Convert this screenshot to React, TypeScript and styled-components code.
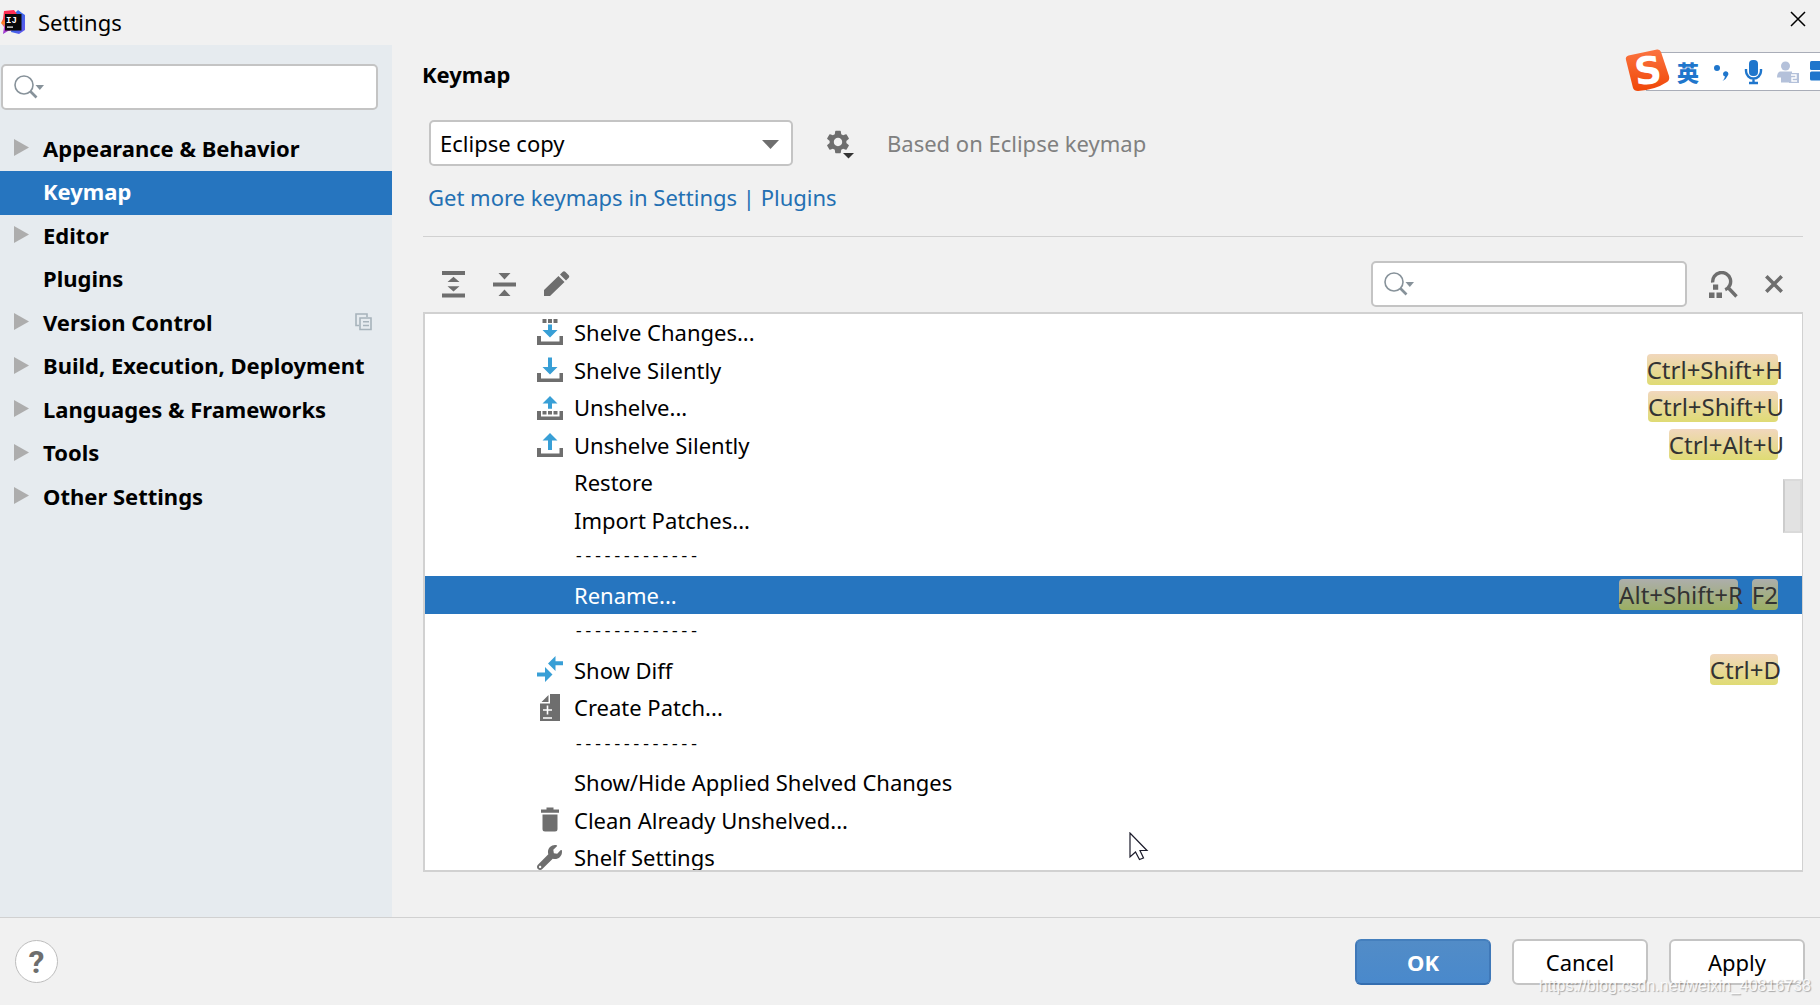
import React from "react";
import styled, { createGlobalStyle, css } from "styled-components";
import { FaWrench } from "react-icons/fa";
import { MdSettings } from "react-icons/md";

const GREY = "#6e6e6e";
const BLUE = "#389fd6";
const SELECTED = "#2675bf";
const LINE = "#d1d1d1";

const GlobalStyle = createGlobalStyle`
  *, *::before, *::after { box-sizing: border-box; }
  body { margin: 0; }
  body, button, input, select {
    font-family: "Noto Sans", "Open Sans", "Noto Sans CJK SC", sans-serif;
    font-size: 22px;
    line-height: 30px;
    color: #000;
  }
  button { border: 0; padding: 0; background: none; }
  svg { display: block; flex: none; }
`;

const Window = styled.div`
  height: 100vh;
  display: flex;
  flex-direction: column;
  background: #f1f1f1;
  overflow: hidden;
  position: relative;
`;

const TitleBar = styled.header`
  flex: none;
  height: 45px;
  display: flex;
  align-items: center;
  gap: 12px;
  padding: 0 14px 0 1px;
`;

const Title = styled.h1`
  flex: 1;
  margin: 0;
  padding-bottom: 2px;
  font-size: 22px;
  font-weight: 400;
`;

const IconButton = styled.button`
  display: flex;
  align-items: center;
  justify-content: center;
`;

const WindowClose = styled(IconButton)`
  align-self: flex-start;
  height: 38px;
`;

const Body = styled.div`
  flex: 1;
  min-height: 0;
  display: flex;
`;

const Sidebar = styled.nav`
  flex: none;
  width: 392px;
  padding-top: 19px;
  background: #e6ebef;
`;

const SearchBox = styled.label`
  display: flex;
  align-items: center;
  gap: 4px;
  height: 46px;
  padding: 0 10px;
  border: 2px solid #c4c4c4;
  border-radius: 5px;
  background: #fff;
`;

const SearchInput = styled.input`
  flex: 1;
  min-width: 0;
  border: 0;
  outline: 0;
  background: transparent;
`;

const SideSearch = styled.div`
  margin: 0 14px 18px 1px;
`;

const SideList = styled.ul`
  margin: 0;
  padding: 0;
  list-style: none;
`;

const SideItem = styled.li`
  height: 43px;
  &:nth-child(even) { height: 44px; }
`;

const SideButton = styled.button<{ $selected?: boolean }>`
  width: 100%;
  height: 100%;
  display: flex;
  align-items: center;
  padding: 0 20px 4px 14px;
  font-weight: 700;
  text-align: left;
  white-space: nowrap;
  ${(p) => p.$selected && css`background: ${SELECTED}; color: #fff;`}
`;

const ArrowSlot = styled.span`
  flex: none;
  width: 29px;
`;

const SideLabel = styled.span`
  flex: 1;
`;

const Main = styled.main`
  flex: 1;
  min-width: 0;
  display: flex;
  flex-direction: column;
  padding: 14px 17px 45px 31px;
`;

const Heading = styled.h2`
  margin: 0 0 31px -1px;
  font-size: 22px;
  font-weight: 700;
`;

const SchemeRow = styled.div`
  display: flex;
  align-items: center;
  padding-left: 6px;
`;

const SelectWrap = styled.div`
  position: relative;
  width: 364px;
  margin-right: 33px;
`;

const Select = styled.select`
  appearance: none;
  width: 100%;
  height: 46px;
  padding: 0 40px 0 9px;
  border: 2px solid #c4c4c4;
  border-radius: 5px;
  background: #fff;
`;

const SelectArrow = styled.svg`
  position: absolute;
  right: 14px;
  top: 20px;
  pointer-events: none;
`;

const BasedOn = styled.span`
  margin-left: 33px;
  color: #808080;
`;

const MoreLink = styled.a`
  align-self: flex-start;
  margin: 16px 0 24px 5px;
  color: #2470b3;
  text-decoration: none;
`;

const Divider = styled.hr`
  flex: none;
  width: 100%;
  height: 1px;
  margin: 0 0 24px;
  border: 0;
  background: ${LINE};
`;

const Toolbar = styled.div`
  display: flex;
  align-items: center;
  gap: 27px;
  padding: 0 20px 0 19px;
  margin-bottom: 5px;
`;

const ActionSearch = styled.div`
  width: 316px;
  margin: 0 -5px 0 auto;
`;

const ListFrame = styled.div`
  position: relative;
  flex: 1;
  min-height: 0;
  overflow: hidden;
  border: 2px solid ${LINE};
  border-right-width: 1px;
  background: #fff;
`;

const ActionList = styled.ul`
  margin: 0;
  padding: 0;
  list-style: none;
`;

const ActionRow = styled.li<{ $selected?: boolean }>`
  height: 37px;
  display: flex;
  align-items: center;
  padding: 0 24px 1px 112px;
  white-space: nowrap;
  &:nth-child(even) { height: 38px; }
  ${(p) => p.$selected && css`background: ${SELECTED}; color: #fff;`}
`;

const IconSlot = styled.span`
  flex: none;
  width: 37px;
`;

const ActionName = styled.span`
  flex: 1;
`;

const SeparatorName = styled(ActionName)`
  font-family: "Liberation Mono", monospace;
  font-size: 16px;
`;

const Shortcuts = styled.span`
  display: flex;
  gap: 14px;
  padding-bottom: 1px;
`;

const Key = styled.kbd<{ $selected?: boolean; $overhang: number }>`
  display: block;
  height: 31px;
  border-radius: 4px;
  font: inherit;
  font-size: 24px;
  line-height: 32px;
  color: #333;
  background: ${(p) =>
    p.$selected
      ? "linear-gradient(#adaeac, #9aae62)"
      : "linear-gradient(#f1d7bd, #dfdb74)"};
  > span { margin-right: ${(p) => -p.$overhang}px; }
`;

const ScrollThumb = styled.div`
  position: absolute;
  right: 0;
  top: 165px;
  width: 19px;
  height: 54px;
  border: 2px solid #dadada;
  border-left-color: #cccccc;
  background: #e2e2e2;
`;

const Footer = styled.footer`
  flex: none;
  height: 88px;
  display: flex;
  align-items: center;
  gap: 21px;
  padding: 0 15px;
  border-top: 1px solid ${LINE};
`;

const HelpButton = styled.button`
  width: 43px;
  height: 43px;
  margin-right: auto;
  border: 1px solid #bdbdbd;
  border-radius: 50%;
  background: #fff;
  color: ${GREY};
  font-family: Roboto, sans-serif;
  font-size: 32px;
  font-weight: 700;
`;

const DialogButton = styled.button<{ $primary?: boolean }>`
  width: 136px;
  height: 46px;
  border: 2px solid #c4c4c4;
  border-radius: 6px;
  background: #fff;
  ${(p) =>
    p.$primary &&
    css`
      border-color: #447fbd #3f78b8 #346eb0;
      background: linear-gradient(#528cc7, #4989cc);
      color: #fff;
      font-weight: 700;
    `}
`;

const Watermark = styled.div`
  position: absolute;
  right: 9px;
  bottom: 9px;
  font-family: "Liberation Sans", Arial, sans-serif;
  font-size: 16px;
  line-height: 20px;
  color: rgba(255, 255, 255, 0.85);
  text-shadow: 1px 1px 1px rgba(0, 0, 0, 0.3);
  pointer-events: none;
`;

const ImeBar = styled.div`
  position: absolute;
  top: 52px;
  right: 0;
  width: 174px;
  height: 39px;
  display: flex;
  align-items: center;
  padding-left: 30px;
  border: 1px solid #a9adb8;
  border-right: 0;
  background: #fff;
  color: #1f76cc;
`;

const ImeLogo = styled.svg`
  position: absolute;
  left: -23px;
  top: -5px;
`;

const ImeLanguage = styled.span`
  width: 38px;
  padding-bottom: 2px;
  font-family: "Noto Sans CJK SC", sans-serif;
  font-weight: 900;
`;

const Cursor = styled.svg`
  position: absolute;
  left: 704px;
  top: 518px;
  pointer-events: none;
`;

const SearchIcon = () => (
  <svg width="32" height="24" viewBox="0 0 32 24" fill="none">
    <circle cx="11" cy="10" r="9" stroke="#87929a" strokeWidth="1.6" />
    <path d="M17.5 16.5l6 6" stroke="#87929a" strokeWidth="2.6" />
    <path d="M22.500 10h8.500l-4.200 5z" fill="#87929a" />
  </svg>
);

const TreeArrow = () => (
  <svg width="15" height="17" viewBox="0 0 15 17">
    <path d="M0 0l15 8.500L0 17z" fill="#adadad" />
  </svg>
);

const CopyIcon = () => (
  <svg width="17" height="18" viewBox="0 0 17 18" fill="none" stroke="#a7b3bb" strokeWidth="1.6">
    <path d="M4 12.500H1V1h11v3" />
    <path d="M5 5h11v11.500H5zM8 8.800h6M8 12.500h6" />
  </svg>
);

const IdeaLogo = () => (
  <svg width="25" height="25" viewBox="0 0 25 25">
    <defs>
      <linearGradient id="ideaWarm" x1="0" y1="0" x2="0" y2="1">
        <stop offset="0" stopColor="#fe2857" />
        <stop offset="0.35" stopColor="#fb3a4a" />
        <stop offset="0.55" stopColor="#ff8a1f" />
        <stop offset="0.75" stopColor="#c93ad8" />
        <stop offset="1" stopColor="#9039d0" />
      </linearGradient>
      <linearGradient id="ideaCool" x1="0" y1="0" x2="1" y2="1">
        <stop offset="0" stopColor="#2b7be8" />
        <stop offset="0.5" stopColor="#3d63e8" />
        <stop offset="1" stopColor="#6b57f0" />
      </linearGradient>
    </defs>
    <path d="M13 4l4-4 4 3 3 2v15l-6 4-8-2z" fill="url(#ideaCool)" />
    <path d="M3 1l10-1 3 4-3 16-6 1-5 3 1-7-3-4 2-4z" fill="url(#ideaWarm)" />
    <rect x="4" y="4" width="16.500" height="16.500" fill="#080808" />
    <text x="5" y="12.500" fontFamily="Liberation Mono, monospace" fontSize="9" fontWeight="700" fill="#fff">IJ</text>
    <rect x="6" y="16.500" width="6" height="1.200" fill="#fff" />
  </svg>
);

const TRAY = "M0 17h4v5.500h18.500V17H26v9H0z";

const ICONS = {
  shelve: (
    <svg width="26" height="27" viewBox="0 0 26 27">
      <path d={`${TRAY}M5.500 0h4v4h-4zM11 0h4v4h-4zM16.500 0h4v4h-4z`} fill={GREY} />
      <path d="M11 5.500h4V11h5.500L13 18.500 5.500 11H11z" fill={BLUE} />
    </svg>
  ),
  shelveSilent: (
    <svg width="26" height="27" viewBox="0 0 26 27">
      <path d={TRAY} fill={GREY} />
      <path d="M11 1.500h4V11h5.500L13 18.500 5.500 11H11z" fill={BLUE} />
    </svg>
  ),
  unshelve: (
    <svg width="26" height="27" viewBox="0 0 26 27">
      <path d={`${TRAY}M5.500 17h4v3.500h-4zM11 17h4v3.500h-4zM16.500 17h4v3.500h-4z`} fill={GREY} />
      <path d="M13 2l7.500 7.500H15v5.200h-4V9.500H5.500z" fill={BLUE} />
    </svg>
  ),
  unshelveSilent: (
    <svg width="26" height="27" viewBox="0 0 26 27">
      <path d={TRAY} fill={GREY} />
      <path d="M13 2l7.500 7.500H15V19h-4V9.500H5.500z" fill={BLUE} />
    </svg>
  ),
  diff: (
    <svg width="27" height="27" viewBox="0 0 27 27">
      <path d="M11 7.500L18.500 0v5.200H26v4h-7.500V15zM15.500 18.500L8 11v5.500H0v4h8V26z" fill={BLUE} />
    </svg>
  ),
  patch: (
    <svg width="26" height="27" viewBox="0 0 26 27">
      <path d="M13 0h10v27H3V9.500h10zM4.500 8L11.500 1v7z" fill={GREY} />
      <path d="M10.500 11.500v9M6 16h9M6 24h9" stroke="#fff" strokeWidth="1.600" />
    </svg>
  ),
  trash: (
    <svg width="26" height="27" viewBox="0 0 26 27">
      <path d="M4 3.500h5.500V1.500h7v2H22v3.200H4zM5.500 8.500h15V23q0 2.500-2.500 2.500H8q-2.500 0-2.500-2.500z" fill={GREY} />
    </svg>
  ),
  wrench: <FaWrench size={25} color={GREY} />,
};

type IconName = keyof typeof ICONS;

interface Action {
  name: string;
  icon?: IconName;
  keys?: { text: string; overhang: number }[];
  selected?: boolean;
}

const SEPARATOR = "-------------";

const ACTIONS: Action[] = [
  { name: "Shelve Changes...", icon: "shelve" },
  { name: "Shelve Silently", icon: "shelveSilent", keys: [{ text: "Ctrl+Shift+H", overhang: 5 }] },
  { name: "Unshelve...", icon: "unshelve", keys: [{ text: "Ctrl+Shift+U", overhang: 6 }] },
  { name: "Unshelve Silently", icon: "unshelveSilent", keys: [{ text: "Ctrl+Alt+U", overhang: 6 }] },
  { name: "Restore" },
  { name: "Import Patches..." },
  { name: SEPARATOR },
  {
    name: "Rename...",
    selected: true,
    keys: [{ text: "Alt+Shift+R", overhang: 5 }, { text: "F2", overhang: 0 }],
  },
  { name: SEPARATOR },
  { name: "Show Diff", icon: "diff", keys: [{ text: "Ctrl+D", overhang: 3 }] },
  { name: "Create Patch...", icon: "patch" },
  { name: SEPARATOR },
  { name: "Show/Hide Applied Shelved Changes" },
  { name: "Clean Already Unshelved...", icon: "trash" },
  { name: "Shelf Settings", icon: "wrench" },
];

const SECTIONS = [
  { label: "Appearance & Behavior", group: true },
  { label: "Keymap", selected: true },
  { label: "Editor", group: true },
  { label: "Plugins" },
  { label: "Version Control", group: true, project: true },
  { label: "Build, Execution, Deployment", group: true },
  { label: "Languages & Frameworks", group: true },
  { label: "Tools", group: true },
  { label: "Other Settings", group: true },
];

export default function App() {
  return (
    <Window>
      <GlobalStyle />
      <TitleBar>
        <IdeaLogo />
        <Title>Settings</Title>
        <WindowClose aria-label="Close window">
          <svg width="16" height="16" viewBox="0 0 16 16" stroke="#000" strokeWidth="1.500">
            <path d="M1 1l14 14M15 1L1 15" />
          </svg>
        </WindowClose>
      </TitleBar>

      <Body>
        <Sidebar>
          <SideSearch>
            <SearchBox>
              <SearchIcon />
              <SearchInput type="text" aria-label="Search settings" />
            </SearchBox>
          </SideSearch>
          <SideList>
            {SECTIONS.map((s) => (
              <SideItem key={s.label}>
                <SideButton $selected={s.selected}>
                  <ArrowSlot>{s.group && <TreeArrow />}</ArrowSlot>
                  <SideLabel>{s.label}</SideLabel>
                  {s.project && <CopyIcon />}
                </SideButton>
              </SideItem>
            ))}
          </SideList>
        </Sidebar>

        <Main>
          <Heading>Keymap</Heading>
          <SchemeRow>
            <SelectWrap>
              <Select aria-label="Keymap scheme" defaultValue="Eclipse copy">
                <option>Eclipse copy</option>
              </Select>
              <SelectArrow width="17" height="9" viewBox="0 0 17 9">
                <path d="M0 0h17L8.500 9z" fill={GREY} />
              </SelectArrow>
            </SelectWrap>
            <IconButton aria-label="Scheme actions">
              <svg width="28" height="32" viewBox="0 0 28 32">
                <MdSettings x="-2" y="1" size={28} color={GREY} />
                <path d="M17 26h11l-5.500 5.500z" fill="#333" />
              </svg>
            </IconButton>
            <BasedOn>Based on Eclipse keymap</BasedOn>
          </SchemeRow>
          <MoreLink href="#plugins">Get more keymaps in Settings | Plugins</MoreLink>
          <Divider />
          <Toolbar>
            <IconButton aria-label="Expand all">
              <svg width="24" height="27" viewBox="0 0 24 27" fill={GREY}>
                <path d="M0 0h23v4H0zM0 22.500h23v4H0zM11.500 5.700l6 5.300h-12zM11.500 20.500l6-5.300h-12z" />
              </svg>
            </IconButton>
            <IconButton aria-label="Collapse all">
              <svg width="24" height="27" viewBox="0 0 24 27" fill={GREY}>
                <path d="M0 11.500h23v4H0zM5.500 2h12l-6 6.500zM5.500 25h12l-6-6.500z" />
              </svg>
            </IconButton>
            <IconButton aria-label="Edit shortcut">
              <svg width="26" height="26" viewBox="0 0 26 26" fill={GREY}>
                <path d="M0 25v-6L14.500 5l6 6L6 25zM16 3.500l2.500-2.500q1.500-1.500 3 0l3 3q1.500 1.500 0 3L22 9.500z" />
              </svg>
            </IconButton>
            <ActionSearch>
              <SearchBox>
                <SearchIcon />
                <SearchInput type="text" aria-label="Search actions" />
              </SearchBox>
            </ActionSearch>
            <IconButton aria-label="Find actions by shortcut">
              <svg width="29" height="27" viewBox="0 0 29 27">
                <path d="M0 21.500h5.500V27H0zM7.500 21.500H13V27H7.500zM4 13.500h5.200v5.200H4z" fill={GREY} />
                <path d="M3.700 11.500a9 9 0 1 1 12.500 7.300M19 16.500l8.500 9" fill="none" stroke={GREY} strokeWidth="3.400" />
              </svg>
            </IconButton>
            <IconButton aria-label="Clear filter">
              <svg width="18" height="18" viewBox="0 0 18 18" stroke={GREY} strokeWidth="3.600">
                <path d="M1.300 1.300l15.400 15.400M16.700 1.300L1.300 16.700" />
              </svg>
            </IconButton>
          </Toolbar>

          <ListFrame>
            <ActionList>
              {ACTIONS.map((a, i) => (
                <ActionRow key={i} $selected={a.selected}>
                  <IconSlot>{a.icon && ICONS[a.icon]}</IconSlot>
                  {a.name === SEPARATOR ? (
                    <SeparatorName>{a.name}</SeparatorName>
                  ) : (
                    <ActionName>{a.name}</ActionName>
                  )}
                  {a.keys && (
                    <Shortcuts>
                      {a.keys.map((k) => (
                        <Key key={k.text} $selected={a.selected} $overhang={k.overhang}>
                          <span>{k.text}</span>
                        </Key>
                      ))}
                    </Shortcuts>
                  )}
                </ActionRow>
              ))}
            </ActionList>
            <ScrollThumb />
            <Cursor width="20" height="29" viewBox="0 0 20 29">
              <path
                d="M1 1v24l5.500-5 4 7.500 4-1.500-3.500-7.500h7z"
                fill="#fff"
                stroke="#1b1b2b"
                strokeWidth="1.200"
              />
            </Cursor>
          </ListFrame>
        </Main>
      </Body>

      <Footer>
        <HelpButton aria-label="Help">?</HelpButton>
        <DialogButton $primary>OK</DialogButton>
        <DialogButton>Cancel</DialogButton>
        <DialogButton>Apply</DialogButton>
      </Footer>

      <ImeBar>
        <ImeLogo width="48" height="46" viewBox="0 0 48 46">
          <defs>
            <linearGradient id="imeOrange" x1="0" y1="0" x2="0" y2="1">
              <stop offset="0" stopColor="#fb7440" />
              <stop offset="1" stopColor="#f04708" />
            </linearGradient>
          </defs>
          <path
            d="M4.500 7.500L33 1.500q3-.500 4 2.500l8 24q1 4-2 6-12 8-29 9-4 0-5-3L2 12q-1-3.500 2.500-4.500z"
            fill="url(#imeOrange)"
          />
          <text x="24" y="36" textAnchor="middle" transform="rotate(-6 24 23)" fontFamily="DejaVu Sans, sans-serif" fontWeight="700" fontSize="38" fill="#fff">S</text>
        </ImeLogo>
        <ImeLanguage>英</ImeLanguage>
        <svg width="106" height="28" viewBox="0 0 106 28" fill="#1f76cc">
          <circle cx="3" cy="10" r="3" />
          <path d="M9 16a2.700 2.700 0 1 1 4.500 2q-1 3-5 5 2-2 2.500-4.500Q9 18 9 16z" />
          <rect x="35" y="2" width="9" height="16" rx="4" />
          <path d="M32 11v2a7.500 7.500 0 0 0 15 0v-2M39.500 20v4M35 25h9" fill="none" stroke="#1f76cc" strokeWidth="2.400" />
          <g fill="#b4c1da">
            <circle cx="71.500" cy="8" r="4.500" />
            <path d="M66 13.500h12v11H67v-5h-4q0-5 3-6z" />
            <rect x="75" y="15" width="10" height="10" />
          </g>
          <path d="M77 17h5v3h-4v3h5" fill="none" stroke="#fff" strokeWidth="1.400" />
          <rect x="96" y="3" width="12" height="9" rx="1.500" />
          <rect x="96" y="13.500" width="12" height="9" rx="1.500" />
        </svg>
      </ImeBar>
      <Watermark>https://blog.csdn.net/weixin_40816738</Watermark>
    </Window>
  );
}
